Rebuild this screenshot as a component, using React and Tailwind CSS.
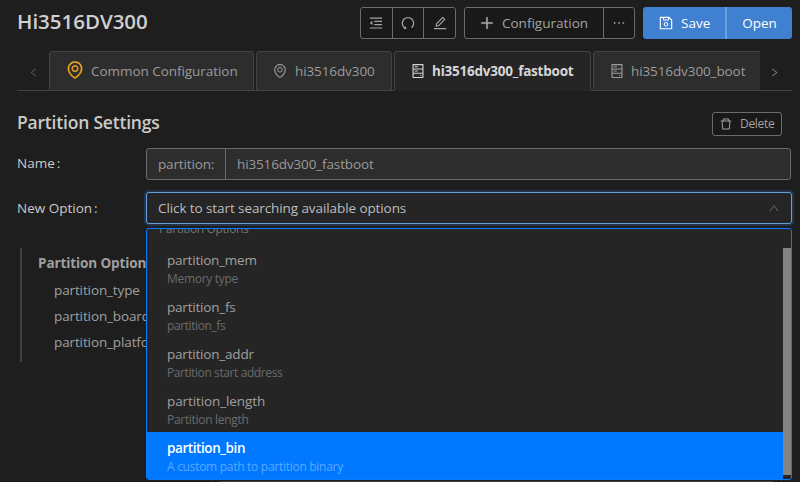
import React from "react";
import {
  AiOutlineMenuFold,
  AiOutlineUndo,
  AiOutlineEdit,
  AiOutlinePlus,
  AiOutlineEllipsis,
  AiOutlineSave,
  AiOutlineDelete,
  AiOutlineLeft,
  AiOutlineRight,
  AiOutlineUp,
  AiOutlineEnvironment,
  AiOutlineHdd,
} from "react-icons/ai";

const options = [
  { name: "partition_mem", hint: "Memory type", nameTrack: "tracking-[-0.22px]", hintTrack: "tracking-[-0.3px]" },
  { name: "partition_fs", hint: "partition_fs", nameTrack: "tracking-[-0.2px]", hintTrack: "tracking-[-0.4px]" },
  { name: "partition_addr", hint: "Partition start address", nameTrack: "tracking-[-0.2px]", hintTrack: "tracking-[-0.4px]" },
  { name: "partition_length", hint: "Partition length", nameTrack: "tracking-[-0.1px]", hintTrack: "tracking-[-0.3px]" },
  { name: "partition_bin", hint: "A custom path to partition binary", nameTrack: "tracking-[-0.42px]", hintTrack: "tracking-[-0.28px]", active: true },
];

function Header() {
  return (
    <header className="flex h-8 items-center pr-[8px] pl-[17px]">
      <h1 className="-mt-[5px] flex-1 text-[20.5px] font-semibold tracking-[-0.02px] text-[#d0d0d0]">Hi3516DV300</h1>
      <div className="flex h-8 w-[96px] divide-x divide-[#6b6b6b] rounded-[3px] border border-[#6b6b6b] bg-[#191919] text-[16px] text-[#a3a3a3]">
        <button className="grid flex-1 place-items-center"><AiOutlineMenuFold /></button>
        <button className="grid flex-1 place-items-center"><AiOutlineUndo /></button>
        <button className="grid flex-1 place-items-center"><AiOutlineEdit /></button>
      </div>
      <div className="ml-[8px] flex h-8 w-[171px] rounded-[3px] border border-[#6b6b6b] bg-[#191919] text-[#a3a3a3]">
        <button className="flex w-[139px] items-center border-r border-[#6b6b6b] pl-[14px]">
          <AiOutlinePlus className="size-[16px]" strokeWidth="40" />
          <span className="ml-[7px]">Configuration</span>
        </button>
        <button className="grid flex-1 place-items-center"><AiOutlineEllipsis className="size-[16px]" /></button>
      </div>
      <div className="ml-[8px] flex h-8 w-[149px] rounded-[3px] bg-[#4080d0] text-white">
        <button className="flex w-[84px] items-center border-r-2 border-[#6c9fe0] pl-[15px]">
          <AiOutlineSave className="size-[16px]" />
          <span className="ml-[7px]">Save</span>
        </button>
        <button className="flex-1">Open</button>
      </div>
    </header>
  );
}

function Tabs() {
  return (
    <nav className="mt-[12px] mr-[8px] ml-[17px] flex h-[40px] border-b border-[#434343] text-[#9b9b9b]">
      <div className="grid w-[32px] place-items-center pt-[3px]"><AiOutlineLeft className="size-[11px] text-[#5c5c5c]" /></div>
      <div className="-mb-px flex min-w-0 flex-1 gap-[2px] overflow-hidden">
        <div className="flex h-[40px] w-[205px] shrink-0 items-center rounded-t-[3px] border border-[#434343] bg-[#2d2d2d] pl-[15px]">
          <AiOutlineEnvironment className="-mt-[3px] size-[20px] text-[#f5a81c]" strokeWidth="12" />
          <span className="ml-[6px] tracking-[-0.05px]">Common Configuration</span>
        </div>
        <div className="flex h-[40px] w-[136px] shrink-0 items-center rounded-t-[3px] border border-[#434343] bg-[#2d2d2d] pl-[15px]">
          <AiOutlineEnvironment className="size-[16px]" />
          <span className="ml-[7px] tracking-[-0.1px]">hi3516dv300</span>
        </div>
        <div className="flex h-[40px] w-[197px] shrink-0 items-center rounded-t-[3px] border border-[#434343] border-b-[#252525] bg-[#252525] pl-[15px] font-bold text-[#d6d6d6]">
          <AiOutlineHdd className="size-[16px]" />
          <span className="ml-[6px] tracking-[-0.22px]">hi3516dv300_fastboot</span>
        </div>
        <div className="flex h-[40px] w-[190px] shrink-0 items-center rounded-t-[3px] border border-[#434343] bg-[#2d2d2d] pl-[15px]">
          <AiOutlineHdd className="size-[16px]" />
          <span className="ml-[6px] tracking-[-0.1px]">hi3516dv300_boot</span>
        </div>
      </div>
      <div className="grid w-[32px] place-items-center pt-[3px] pr-[4px]"><AiOutlineRight className="size-[11px] text-[#858585]" /></div>
    </nav>
  );
}

function OptionMenu() {
  return (
    <div className="absolute top-[36px] left-0 h-[252px] w-[646px] overflow-hidden rounded-[3px] border border-[#0a7aff] bg-[#252525]">
      <div className="-mt-[10px] h-[24px] pl-[12px] text-[12px] leading-[20px] tracking-[-0.35px] text-[#757575]">Partition Options</div>
      <div className="flex">
        <ul className="-mt-px w-[636px] pt-[2px]">
          {options.map((o) => (
            <li key={o.name} className={`h-[47px] pt-[6px] pl-[20px] ${o.active ? "bg-[#0078ff]" : ""}`}>
              <div className={`leading-[20px] ${o.nameTrack} ${o.active ? "font-semibold text-white" : "text-[#a0a0a0]"}`}>{o.name}</div>
              <div className={`text-[12px] leading-[18px] ${o.hintTrack} ${o.active ? "text-[#5ca8ff]" : "text-[#6b6b6b]"}`}>{o.hint}</div>
            </li>
          ))}
        </ul>
        <div className="mt-[5px] h-[227px] w-[8px] bg-[#848484]" />
      </div>
    </div>
  );
}

export default function App() {
  return (
    <div className="flex h-[482px] w-[800px] flex-col overflow-hidden bg-[#1e1e1e] pt-[7px] font-['Open_Sans','Noto_Sans',sans-serif] text-[13.5px] leading-[20px] text-[#cacaca]">
      <Header />
      <Tabs />
      <main className="relative flex-1 pl-[17px]">
        <div className="flex h-[57px] items-center pr-[18px]">
          <h2 className="flex-1 pt-[4px] text-[17.5px] font-semibold tracking-[-0.2px]">Partition Settings</h2>
          <button className="mt-[9px] flex h-[24px] w-[70px] items-center rounded-[3px] border border-[#6b6b6b] bg-[#191919] pl-[6px] text-[12px] text-[#a3a3a3]">
            <AiOutlineDelete className="size-[14px]" />
            <span className="ml-[7px] tracking-[-0.3px]">Delete</span>
          </button>
        </div>
        <div className="flex h-[32px]">
          <label className="w-[129px] pt-[5px]">Name<span className="ml-[2px]">:</span></label>
          <div className="flex h-[32px] w-[645px] items-center rounded-[3px] border border-[#6b6b6b] bg-[#2d2d2d] text-[#9a9a9a]">
            <span className="flex h-full w-[79px] items-center border-r border-[#6b6b6b] pl-[11px] tracking-[-0.15px]">partition:</span>
            <span className="pl-[11px] tracking-[-0.13px]">hi3516dv300_fastboot</span>
          </div>
        </div>
        <div className="mt-[12px] flex h-[32px]">
          <label className="w-[129px] pt-[6px]">New Option<span className="ml-[2px]">:</span></label>
          <div className="relative">
            <div className="flex h-[32px] w-[646px] items-center justify-between rounded-[3px] border border-[#64a0e0] bg-[#252525] pr-[11px] pl-[11px] text-[#bdbdbd] shadow-[0_0_0_2px_#25324a]">
              <span className="tracking-[-0.09px]">Click to start searching available options</span>
              <AiOutlineUp className="size-[12px] text-[#606060]" />
            </div>
            <OptionMenu />
          </div>
        </div>
        <section className="mt-[24px] ml-[3px] h-[114px] border-l-2 border-[#404040] pt-[2px] pl-[16px] text-[#a0a0a0]">
          <h3 className="h-[27px] pt-[3px] font-bold tracking-[-0.1px]">Partition Options</h3>
          <ul className="pl-[16px] leading-[26px] tracking-[-0.12px]">
            <li>partition_type</li>
            <li>partition_board</li>
            <li>partition_platform</li>
          </ul>
        </section>
      </main>
      <footer className="flex h-[2px] w-full pt-px">
        <div className="h-px w-[211px] bg-[#1c1214]" />
        <div className="h-px w-px bg-[#4a4a4a]" />
        <div className="ml-[8px] h-px w-[553px] bg-[#3c3c3c]" />
        <div className="ml-[8px] h-px w-px bg-[#4a4a4a]" />
      </footer>
    </div>
  );
}
